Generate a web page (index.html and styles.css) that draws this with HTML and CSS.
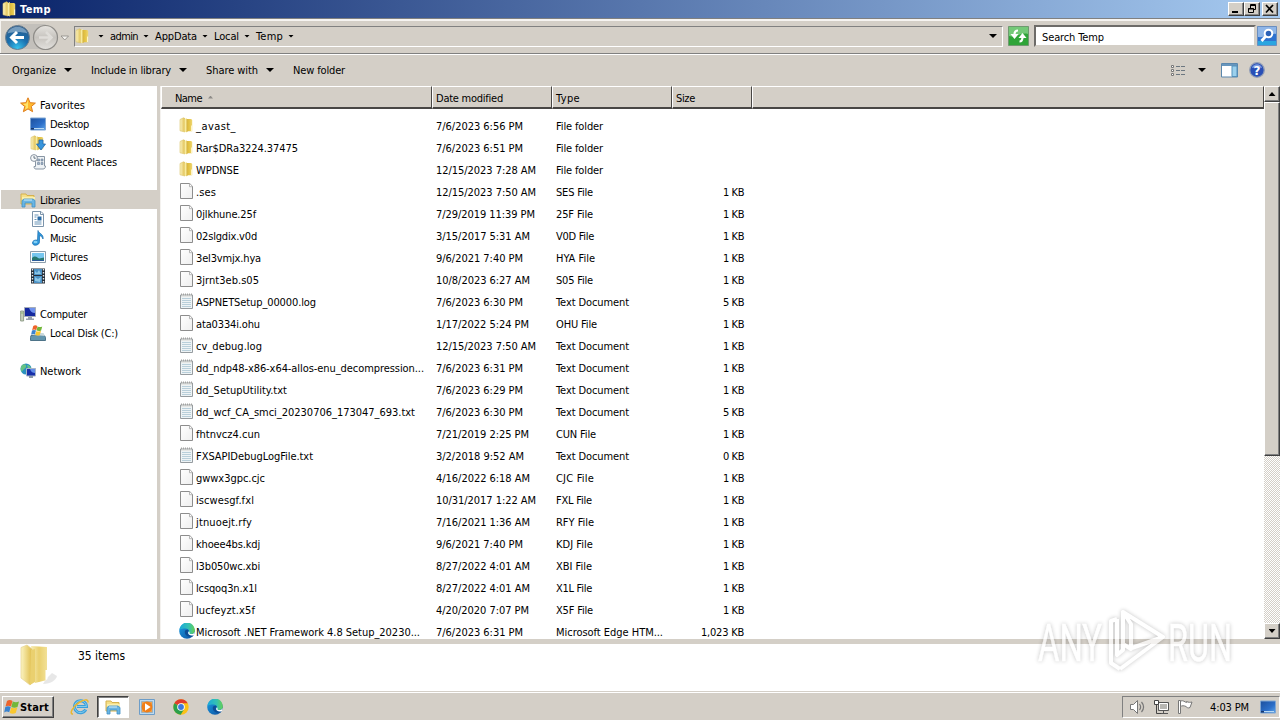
FILE: index.html
```html
<!DOCTYPE html>
<html lang="en">
<head>
<meta charset="utf-8">
<title>Temp</title>
<link rel="stylesheet" href="styles.css">
</head>
<body>
<svg class="defs" width="0" height="0">
  <defs>
    <linearGradient id="gold" x1="0" x2="1"><stop offset="0" stop-color="#f4e69a"/><stop offset=".5" stop-color="#e2c03f"/><stop offset="1" stop-color="#eed673"/></linearGradient>
    <linearGradient id="goldLight" x1="0" x2="1"><stop offset="0" stop-color="#fbf3c0"/><stop offset="1" stop-color="#dfbd4b"/></linearGradient>
    <linearGradient id="page" x1="0" y1="0" x2="1" y2="1"><stop offset="0" stop-color="#fff"/><stop offset="1" stop-color="#eeeeee"/></linearGradient>
    <linearGradient id="edgeBlue" x1="0" x2="1" y2="1"><stop offset="0" stop-color="#1b9de2"/><stop offset="1" stop-color="#0c4f9f"/></linearGradient>
    <linearGradient id="edgeGreen" x1="0" x2="1"><stop offset="0" stop-color="#1aa9dc"/><stop offset=".6" stop-color="#35c1b1"/><stop offset="1" stop-color="#66d153"/></linearGradient>
    <linearGradient id="screen" x1="0" x2="1" y2="1"><stop offset="0" stop-color="#1c4f9c"/><stop offset=".6" stop-color="#2c6fc9"/><stop offset="1" stop-color="#5fa6ea"/></linearGradient>
    <radialGradient id="orbBlue" cx=".5" cy=".95" r=".9"><stop offset="0" stop-color="#36c3ee"/><stop offset=".5" stop-color="#1a6fae"/><stop offset="1" stop-color="#2b5c8c"/></radialGradient>
    <linearGradient id="orbGray" x2="0" y2="1"><stop offset="0" stop-color="#e6e4e0"/><stop offset=".5" stop-color="#c6c3be"/><stop offset="1" stop-color="#e3e1dd"/></linearGradient>
  </defs>
  <symbol id="folder" viewBox="0 0 16 16">
    <path d="M1 2.500 4.500.8 6 1.600V15L1 13.800z" fill="url(#goldLight)" stroke="#dcc265" stroke-width=".6"/>
    <path d="M6 2h6.200l1 1v11.200H6z" fill="url(#gold)"/>
    <path d="M5.600 2.200 8 1v14.400L5.600 14.600z" fill="#f8ec9f"/><path d="M8 2v13" stroke="#c99f22" stroke-width=".8"/>
    <path d="M12.600 8.500v5.500" stroke="#fff8cf" stroke-width="1"/>
  </symbol>
  <symbol id="file" viewBox="0 0 16 16"><path d="M1.500.5h9.200l2.800 2.800v12.200h-12z" fill="url(#page)" stroke="#8d8d8d"/><path d="M10.500.8v2.900h2.800" fill="#fff" stroke="#a5a5a5" stroke-width=".8"/></symbol>
  <symbol id="text" viewBox="0 0 16 16"><path d="M1.500 2h12v13.500h-12z" fill="#eef3f5" stroke="#969ca0"/><path d="M3 5.500h9M3 7.500h9M3 9.500h9M3 11.500h9M3 13.500h9" stroke="#abc5d3" stroke-width=".8"/><path d="M2 1.500h11" stroke="#a4a4a2" stroke-width="2" stroke-dasharray="1 1"/><path d="M2 3.200h11" stroke="#e1e1dc"/></symbol>
  <symbol id="edge" viewBox="0 0 16 16"><circle cx="8" cy="8" r="7.800" fill="url(#edgeBlue)"/><path d="M.4 7A7.700 7.700 0 0 1 15.800 7.500c0 2.100-1.400 3.500-3.600 3.500-2 0-2.900-1-2.400-1.800C10.700 7.500 9 5.500 6.300 5.500 3.800 5.500 1.500 6 .4 7z" fill="url(#edgeGreen)"/><path d="M5.800 8.500c-.3 3 2.500 5.600 6 5.200 1.500-.2 2.300-.8 3-1.500-2.500 1-6 .4-6-3 0-1 .4-1.500 1-2-2-1-3.800-.2-4 1.300z" fill="#0d4d95"/><path d="M10 8.300c1 1.500.2 1.700.5 2.200 1.100 1.100 4.200.7 5-1.600l-.4 3c-2.600 1.200-5.800.3-6-2.200z" fill="#fff"/></symbol>
  <symbol id="star" viewBox="0 0 16 16"><path d="m8 .8 2.100 4.900 5.300.4-4.100 3.400 1.300 5.200L8 11.900l-4.600 2.800 1.300-5.200L.6 6.100l5.300-.4z" fill="#ffb92e" stroke="#df7e1d"/><path d="M8 3v8L5 12.500 6 9 3 7l3.500-.5z" fill="#ffe36c"/></symbol>
  <symbol id="desktop" viewBox="0 0 16 16"><path d="M.5 2h15v12H.5z" fill="url(#screen)" stroke="#7fa6d3"/><path d="M2 12.500h12" stroke="#b8daf4"/><path d="M1 12h3v1.500H1z" fill="#14366f"/></symbol>
  <symbol id="downloads" viewBox="0 0 16 16"><use href="#folder"/><path d="M9 5h4v4h2.500L11 15 6.500 9H9z" fill="#3895dc" stroke="#2168ab" stroke-width=".8"/></symbol>
  <symbol id="recent" viewBox="0 0 16 16"><path d="M5.500 2.500h9v9.500h1c0 2-1 3-2.500 3H6c-1.500 0-2-1-2-2.500h1.500z" fill="#eef2f5" stroke="#8895a3"/><path d="M7.500 5h2v2h-2zM11 5h2v2h-2zM7.500 8.500h2v2h-2zM11 8.500h2v2h-2z" fill="#9fb4c8" stroke="#6e8299" stroke-width=".6"/><circle cx="4" cy="4" r="3.400" fill="#f7f9fa" stroke="#8993a0"/><path d="M4 2v2.200h1.800" stroke="#456" fill="none" stroke-width=".8"/></symbol>
  <symbol id="libraries" viewBox="0 0 16 16"><path d="M1 2h5l1 1.500h7V12H1z" fill="#f5df87" stroke="#d5b14e"/><path d="M2 5h13v4H2z" fill="#fbefac"/><path d="M2 8.500 4 7h9l2 1.500V15h-3v-4H5v4H2z" fill="#69b5e3" stroke="#3f8fc4" stroke-width=".8"/><path d="M4 8h8" stroke="#d2effc"/></symbol>
  <symbol id="documents" viewBox="0 0 16 16"><path d="M2.500.5h8.500l2.500 2.500v12.500h-11z" fill="#fff" stroke="#7c94ab"/><path d="M4.500 4h4M4.500 6h2M4.500 8.500h2M4.500 11h7M4.500 13h7" stroke="#6994b8"/><path d="M7.500 5.500h4v4h-4z" fill="#296aa5"/><path d="M10.500 1v2.500h3" fill="none" stroke="#7c94ab"/></symbol>
  <symbol id="music" viewBox="0 0 16 16"><path d="M8 .5c.5 3 6 3.500 5 8.500-1-2.300-2-3-3.500-3.500v6.200c0 4-6.500 4.800-7 1.500-.3-2.500 2.500-3.700 5-3z" fill="#2f98dc" stroke="#176cae" stroke-width=".7"/><ellipse cx="5.500" cy="12" rx="2" ry="1.300" fill="#82d0f5"/></symbol>
  <symbol id="pictures" viewBox="0 0 16 16"><path d="M.5 2.500h15v11H.5z" fill="#f9fcfd" stroke="#8d9dab"/><path d="M2 4h12v8H2z" fill="#77c6ee"/><path d="M2 9c3-3 5-1 6 0s4 0 6-.5V12H2z" fill="#27786f"/><path d="M2 11h12v1H2z" fill="#2b5b99"/></symbol>
  <symbol id="videos" viewBox="0 0 16 16"><path d="M1 .5h14v15H1z" fill="#252e38"/><path d="M4 1h8v6H4zM4 8h8v7H4z" fill="#4b91c5"/><path d="M5 6V3l2 2 2-3 2 4zM5 13V9l3 2 3-2-1 5z" fill="#8dc7e6"/><path d="M2.500 1v14M13.500 1v14" stroke="#e6eaee" stroke-width="1.400" stroke-dasharray="1.500 1.500"/></symbol>
  <symbol id="computer" viewBox="0 0 16 16"><path d="M4.500 1.500h11v9h-11z" fill="#15299f" stroke="#a4acb9"/><path d="M9 2h6v5C12 7 10 5 9 2z" fill="#6e91ed"/><path d="M8 11h4v1.500H8zM6 12.500h8V14H6z" fill="#96a0ae"/><path d="M.6 5h3v10h-3z" fill="#c5cfba" stroke="#82907b" stroke-width=".8"/><path d="M1.500 7h1" stroke="#56a232"/></symbol>
  <symbol id="disk" viewBox="0 0 16 16"><path d="M1 10.500h13.500l1 2v3H.5v-3z" fill="#6295ad" stroke="#4d7388"/><path d="M1 10 2.500 8h11l1.500 3z" fill="#c9d9dd"/><use href="#flag" x="1" y="-.5" width="12" height="12"/></symbol>
  <symbol id="flag" viewBox="0 0 16 16"><path d="M3 2c2-1.500 4-1 5.500 0L7 7.500c-2-1-3.500-1-5.500 0z" fill="#ee642b"/><path d="M8.800 2.500c2 1 4.200 1 6.200 0L13.500 8c-2 1-4.500.8-6.200 0z" fill="#72b73a"/><path d="M1.300 8c2-1.200 3.700-1 5.400 0L5.200 13.200c-2-1-3.400-.8-5 .2z" fill="#3a83cf"/><path d="M7.200 8.500c2 1 4.300.8 6.200 0l-1.700 5.500c-2 1-4.300.8-6 0z" fill="#f9c72f"/></symbol>
  <symbol id="network" viewBox="0 0 16 16"><circle cx="6" cy="6" r="5.500" fill="#2a91bf"/><path d="M2 2c3-2 5 0 4 2S3 6 2 9C0 7 .5 4 2 2zM7 2c2 0 3 1 4 3L8 6z" fill="#65c384"/><path d="M6.500 5.500h9v7.500h-9z" fill="#172fa9" stroke="#a9b6c6"/><path d="M10 6h5v4c-2 0-4-1-5-4z" fill="#628ee9"/><path d="M9 13h4v2H9z" fill="#8c99a9"/></symbol>
  <symbol id="ie" viewBox="0 0 20 18"><path d="M15.800 11.500a6 6 0 1 1 .7-3H7" fill="none" stroke="#3a9fdb" stroke-width="3"/><path d="M15.800 11.500a6 6 0 1 1 .7-3H7" fill="none" stroke="#94d8f4" stroke-width=".8"/><path d="M3 16C-1 16.500 2 9 9 4.500 14 1.200 18.500.8 18 4.500" fill="none" stroke="#e8b730" stroke-width="1.500"/></symbol>
  <symbol id="player" viewBox="0 0 16 16"><path d="M.5.5h15v15H.5z" fill="#bcdaf0" stroke="#6d9dc8"/><path d="M2.500 2.500h11v11h-11z" fill="#f0a04c" stroke="#7aa7c9" stroke-width=".6"/><circle cx="8" cy="8" r="5.400" fill="#f07f18"/><path d="m6 4.200 5.600 3.800L6 11.800z" fill="#fff"/></symbol>
  <symbol id="chrome" viewBox="0 0 16 16"><circle cx="8" cy="8" r="7.700" fill="#fbc116"/><path d="M8 8 1.300 4.200A7.700 7.700 0 0 1 14.700 4.200H8z" fill="#df3b2e"/><path d="M1.300 4.200A7.700 7.700 0 0 0 7.700 15.700L11.200 10 8 8z" fill="#2ca04b"/><circle cx="8" cy="8" r="3.800" fill="#fff"/><circle cx="8" cy="8" r="2.900" fill="#3e78dc"/></symbol>
</svg>

<header class="titlebar">
  <svg class="i16"><use href="#folder"/></svg>
  <b class="t title" data-w="31">Temp</b>
  <span class="spacer"></span>
  <span class="winbtn"><svg width="14" height="12"><path d="M3 9h6" stroke="#000" stroke-width="2"/></svg></span>
  <span class="winbtn"><svg width="14" height="12"><path d="M5.500 5V1.500h5v5H9M5 2.500h6M3.500 5.500h5v4h-5zM3 6h6" fill="none" stroke="#000"/></svg></span>
  <span class="winbtn close"><svg width="14" height="12"><path d="m3 2 7 7.500M10 2 3 9.500" stroke="#000" stroke-width="1.700"/></svg></span>
</header>

<nav class="navbar">
  <svg class="orbs" width="72" height="30" viewBox="0 0 72 30">
    <path d="M18 2h28c-5 5-5 20 0 25H18z" fill="#c3c0bb"/>
    <circle cx="17.500" cy="15.500" r="12" fill="url(#orbBlue)" stroke="#6b7f90"/><path d="M7.500 11.500C10.500 2.500 24.500 2.500 27.500 11.500c-6-2-14-2-20 0z" fill="#a9c5dc" opacity=".6"/><path d="M17 10 11.500 15.500 17 21M12 15.500h12" stroke="#fff" stroke-width="3" fill="none"/>
    <circle cx="45.500" cy="15.500" r="12" fill="url(#orbGray)" stroke="#8e8c88" stroke-width="1.200"/><path d="M46 10 51.500 15.500 46 21M51 15.500H39" stroke="#dfddd9" stroke-width="2.600" fill="none"/>
    <path d="M61 14h7.500l-3.700 4z" fill="#f4f2ee" stroke="#8a8884" stroke-width=".8"/>
  </svg>
  <div class="address">
    <svg class="i16"><use href="#folder"/></svg>
    <i class="arrow a1"></i><span class="t crumb" data-w="28">admin</span>
    <i class="arrow"></i><span class="t crumb" data-w="42">AppData</span>
    <i class="arrow"></i><span class="t crumb" data-w="25">Local</span>
    <i class="arrow"></i><span class="t crumb" data-w="27">Temp</span>
    <i class="arrow"></i><span class="spacer"></span><i class="arrow big"></i>
  </div>
  <svg class="refresh" width="21" height="20"><path d="M.5.5h20v19H.5z" fill="#2fa438" stroke="#6f9970"/><path d="M1 1h19v7C13 6 8 12 1 10z" fill="#74c978"/><path d="M10 4.500C7.500 4.500 6.500 6 6.500 8.500" fill="none" stroke="#fff" stroke-width="2.200"/><path d="M2.500 8h8l-4 5z" fill="#fff"/><path d="M14.500 11c0 3-1 4.500-3 4.500" fill="none" stroke="#fff" stroke-width="2.200"/><path d="M10.500 12h8l-4-5z" fill="#fff"/></svg>
  <div class="search"><span class="t" data-w="62">Search Temp</span></div>
  <svg class="find" width="20" height="20"><path d="M.5.5h19v19H.5z" fill="#2e72cf" stroke="#6b8fc0"/><path d="M1 1h18v7C12 7 8 12 1 11z" fill="#8fb6e8"/><path d="M1 15h18v4H1z" fill="#2ba5e0"/><circle cx="11.500" cy="7.500" r="3.800" fill="#2c62b8" stroke="#fff" stroke-width="2"/><path d="m8.500 10.500-4 4.500" stroke="#fff" stroke-width="2.800"/></svg>
</nav>

<div class="toolbar">
  <span class="t" data-w="44">Organize</span><i class="arrow big"></i>
  <span class="t include" data-w="80">Include in library</span><i class="arrow big"></i>
  <span class="t share" data-w="52">Share with</span><i class="arrow big"></i>
  <span class="t newf" data-w="52">New folder</span>
  <span class="spacer"></span>
  <svg width="16" height="13"><path d="M1.500 1.500h2v2h-2zM1.500 5.500h2v2h-2zM1.500 9.500h2v2h-2z" fill="#fff" stroke="#777"/><path d="M6 2.500h4M11 2.500h4M6 6.500h4M11 6.500h4M6 10.500h4M11 10.500h4" stroke="#6c7780"/></svg>
  <i class="arrow big views"></i>
  <svg class="pane" width="17" height="15"><path d="M.5.5h16v13.500H.5z" fill="#fff" stroke="#5a87ad"/><path d="M1 2h15" stroke="#6796bd" stroke-width="2"/><path d="M11 3h5v10.500h-5z" fill="#9bd0ed" stroke="#5591bb"/></svg>
  <svg class="help" width="16" height="16"><circle cx="8" cy="8" r="7.300" fill="#294fb6" stroke="#929eb6" stroke-width="1.300"/><path d="M3 6c1-5 9-5 10 0-3-1-7-1-10 0z" fill="#7c9be0"/><text x="8" y="12.500" class="q">?</text></svg>
</div>

<main class="body">
  <aside class="tree" id="tree"></aside>
  <section class="list">
    <div class="head">
      <div class="h name"><span class="t" data-w="27">Name</span><i class="sort"></i></div>
      <div class="h date"><span class="t" data-w="67">Date modified</span></div>
      <div class="h type"><span class="t" data-w="24">Type</span></div>
      <div class="h size"><span class="t" data-w="19">Size</span></div>
      <div class="h rest"></div>
    </div>
    <div class="rows" id="rows"></div>
  </section>
  <div class="scroll">
    <span class="sb"><i class="up"></i></span><span class="thumb"></span><span class="track"></span><span class="sb"><i class="down"></i></span>
  </div>
</main>

<footer class="details">
  <svg width="42" height="44" viewBox="0 0 42 44"><path d="M26 35 32 29l5 3c-1 4-6 8-14 8z" fill="#bbb" opacity=".35"/><path d="m11 2 16 1v33l-12 3z" fill="url(#gold)" opacity=".75"/><path d="M1 3.500 7 1l5 4v34l-2 2-9-7z" fill="url(#goldLight)" stroke="#e5d393" stroke-width=".7"/><path d="m11 6 4-1v33l-5 3z" fill="#ead06f"/><path d="M25.500 26h2v9l-2 2z" fill="#fff"/></svg>
  <span class="t count" data-w="47">35 items</span>
</footer>

<footer class="taskbar">
  <div class="start"><svg width="16" height="16"><use href="#flag"/></svg><b class="t" data-w="29">Start</b></div>
  <svg class="ie" width="20" height="18"><use href="#ie"/></svg>
  <div class="active"><svg class="i16"><use href="#libraries"/></svg></div>
  <svg class="i16 wmp"><use href="#player"/></svg>
  <svg class="i16 chr"><use href="#chrome"/></svg>
  <svg class="i16 edg"><use href="#edge"/></svg>
  <span class="spacer"></span>
  <div class="tray">
    <svg width="17" height="16"><path d="M1.500 5.500h3l4-4v13l-4-4h-3z" fill="#fff" stroke="#777"/><path d="M10.500 5c1.500 2 1.500 4 0 6M12.500 3c2.500 3 2.500 7 0 10" fill="none" stroke="#777" stroke-width="1.200"/></svg>
    <svg class="net" width="17" height="16"><path d="M5.500 3.500h10v8h-10z" fill="#b7b6b2" stroke="#555"/><path d="M6.500 4.500h8v6h-8z" fill="none" stroke="#fff"/><path d="M7 14.500h8M10.500 12v2" stroke="#555"/><path d="M1.500 1.500h4v4h-4z" fill="#fff" stroke="#444"/><path d="M3.500 6v8.500H8" fill="none" stroke="#444"/></svg>
    <svg class="flg" width="17" height="16"><path d="M1.500 1.500h2v13h-2z" fill="#fff" stroke="#777"/><path d="M3.500 2c3-1 4 1 6 1.500v-1c2 1 4 1 5.500.5l-2 5.500c-2 1-3 0-4-1-2-1-4-1-5.500 0z" fill="#fff" stroke="#777"/></svg>
    <span class="t clock" data-w="39">4:03 PM</span>
    <svg class="i16 desk"><use href="#desktop"/></svg>
  </div>
</footer>

<svg class="watermark" width="240" height="100" viewBox="0 0 240 100">
  <g class="mark">
    <text x="8" y="61" textLength="64" lengthAdjust="spacingAndGlyphs">ANY</text>
    <text x="138" y="61" textLength="64" lengthAdjust="spacingAndGlyphs">RUN</text>
    <path d="M93 12v32l8 5V24l-8-12 40 25-43 32M87 19l-6 2v42l9 6M93 44v6l-6 5V19M133 37l-34 12"/>
  </g>
</svg>
<script src="app.js"></script>
</body>
</html>
```
FILE: app.js
```js
const icon = id => `<svg class="i16"><use href="#${id}"/></svg>`;
const label = (text, w) => `<span class="t" data-w="${w}">${text}</span>`;

const groups = [
  ['star', 'Favorites', 45, [['desktop', 'Desktop', 39], ['downloads', 'Downloads', 52], ['recent', 'Recent Places', 67]]],
  ['libraries', 'Libraries', 40, [['documents', 'Documents', 53], ['music', 'Music', 26], ['pictures', 'Pictures', 38], ['videos', 'Videos', 31]]],
  ['computer', 'Computer', 47, [['disk', 'Local Disk (C:)', 68]]],
  ['network', 'Network', 41, []]
];
document.getElementById('tree').innerHTML = groups.map(([ic, name, w, kids]) =>
  `<div class="group"><div class="node${name === 'Libraries' ? ' selected' : ''}">${icon(ic)}${label(name, w)}</div>` +
  kids.map(k => `<div class="node child">${icon(k[0])}${label(k[1], k[2])}</div>`).join('') + '</div>').join('');

// icon, name, width, date, width, type, width, size
const files = [
  ['folder', '_avast_', 40, '7/6/2023 6:56 PM', 87, 'File folder', 47, ''],
  ['folder', 'Rar$DRa3224.37475', 102, '7/6/2023 6:51 PM', 87, 'File folder', 47, ''],
  ['folder', 'WPDNSE', 43, '12/15/2023 7:28 AM', 100, 'File folder', 47, ''],
  ['file', '.ses', 20, '12/15/2023 7:50 AM', 100, 'SES File', 37, '1 KB'],
  ['file', '0jlkhune.25f', 60, '7/29/2019 11:39 PM', 99, '25F File', 37, '1 KB'],
  ['file', '02slgdix.v0d', 61, '3/15/2017 5:31 AM', 94, 'V0D File', 38, '1 KB'],
  ['file', '3el3vmjx.hya', 65, '9/6/2021 7:40 PM', 87, 'HYA File', 39, '1 KB'],
  ['file', '3jrnt3eb.s05', 63, '10/8/2023 6:27 AM', 94, 'S05 File', 37, '1 KB'],
  ['text', 'ASPNETSetup_00000.log', 120, '7/6/2023 6:30 PM', 87, 'Text Document', 73, '5 KB'],
  ['file', 'ata0334i.ohu', 64, '1/17/2022 5:24 PM', 93, 'OHU File', 41, '1 KB'],
  ['text', 'cv_debug.log', 66, '12/15/2023 7:50 AM', 100, 'Text Document', 73, '1 KB'],
  ['text', 'dd_ndp48-x86-x64-allos-enu_decompression...', 228, '7/6/2023 6:31 PM', 87, 'Text Document', 73, '1 KB'],
  ['text', 'dd_SetupUtility.txt', 91, '7/6/2023 6:29 PM', 87, 'Text Document', 73, '1 KB'],
  ['text', 'dd_wcf_CA_smci_20230706_173047_693.txt', 219, '7/6/2023 6:30 PM', 87, 'Text Document', 73, '5 KB'],
  ['file', 'fhtnvcz4.cun', 64, '7/21/2019 2:25 PM', 93, 'CUN File', 40, '1 KB'],
  ['text', 'FXSAPIDebugLogFile.txt', 117, '3/2/2018 9:52 AM', 88, 'Text Document', 73, '0 KB'],
  ['file', 'gwwx3gpc.cjc', 69, '4/16/2022 6:18 AM', 94, 'CJC File', 38, '1 KB'],
  ['file', 'iscwesgf.fxl', 58, '10/31/2017 1:22 AM', 100, 'FXL File', 36, '1 KB'],
  ['file', 'jtnuoejt.rfy', 56, '7/16/2021 1:36 AM', 94, 'RFY File', 38, '1 KB'],
  ['file', 'khoee4bs.kdj', 64, '9/6/2021 7:40 PM', 87, 'KDJ File', 37, '1 KB'],
  ['file', 'l3b050wc.xbi', 64, '8/27/2022 4:01 AM', 94, 'XBI File', 36, '1 KB'],
  ['file', 'lcsqoq3n.x1l', 61, '8/27/2022 4:01 AM', 94, 'X1L File', 36, '1 KB'],
  ['file', 'lucfeyzt.x5f', 59, '4/20/2020 7:07 PM', 93, 'X5F File', 37, '1 KB'],
  ['edge', 'Microsoft .NET Framework 4.8 Setup_20230...', 224, '7/6/2023 6:31 PM', 87, 'Microsoft Edge HTM...', 107, '1,023 KB']
];
document.getElementById('rows').innerHTML = files.map(f =>
  `<div class="row"><div class="name">${icon(f[0])}${label(f[1], f[2])}</div><div class="date">${label(f[3], f[4])}</div>` +
  `<div class="type">${label(f[5], f[6])}</div><div class="size">${f[7] ? label(f[7], f[7].length > 4 ? 43 : 21) : ''}</div></div>`).join('');

document.querySelectorAll('.t').forEach(el => {
  const diff = el.dataset.w - el.getBoundingClientRect().width;
  el.style.letterSpacing = (diff / el.textContent.length).toFixed(3) + 'px';
});
```
FILE: styles.css
```css
* { box-sizing: border-box; }
body { margin: 0; width: 1280px; height: 720px; overflow: hidden; display: flex; flex-direction: column; background: #d4cfc7; color: #000; font: 11px/14px "DejaVu Sans Condensed", "DejaVu Sans", sans-serif; font-stretch: condensed; }
svg { flex: none; display: block; }
.defs { position: absolute; }
.i16 { width: 16px; height: 16px; }
.t { white-space: pre; flex: none; padding-top: 2px; }
.spacer { flex: 1; }

.titlebar { height: 18px; flex: none; display: flex; align-items: center; padding: 0 2px; background: linear-gradient(90deg, #0a246a, #a6caf0); color: #fff; }
.title { margin-left: 2px; }
.winbtn { width: 16px; height: 14px; background: #d4cfc7; border: 1px solid; border-color: #fff #404040 #404040 #fff; box-shadow: inset -1px -1px #888; }
.close { margin-left: 2px; }

.navbar { height: 36px; flex: none; display: flex; align-items: center; border-top: 1px solid #808080; border-bottom: 1px solid #808080; box-shadow: inset 1px 2px #f6f4f1, 0 1px #fff; }
.orbs { margin-top: 2px; }
.address { margin-left: 2px; width: 929px; height: 21px; display: flex; align-items: center; border: 1px solid; border-color: #808080 #fff #fff #808080; }
.arrow { width: 6px; height: 3px; background: #000; clip-path: polygon(0 0, 100% 0, 50% 100%); flex: none; }
.a1 { margin-left: 7px; }
.crumb { margin: 0 5px 0 6px; }
.arrow.big { width: 8px; height: 4px; }
.address .big { margin-right: 5px; }
.refresh { margin-left: 5px; }
.search { margin-left: 5px; width: 222px; height: 22px; background: #fff; border: 2px solid; border-color: #6d6b68 #d4cfc7 #d4cfc7 #6d6b68; padding: 2px 6px 0; display: flex; align-items: center; }
.find { margin-left: 1px; }

.toolbar { height: 32px; flex: none; display: flex; align-items: center; padding: 0 15px 0 12px; }
.toolbar .arrow { margin-left: 8px; }
.include { margin-left: 19px; }
.share { margin-left: 19px; }
.newf { margin-left: 19px; }
.toolbar .views { margin-left: 12px; }
.pane { margin-left: 15px; }
.help { margin-left: 11px; }
.q { font: bold 12px "DejaVu Sans", sans-serif; fill: #fff; text-anchor: middle; }

.body { height: 553px; flex: none; display: flex; }
.tree { width: 157px; background: #fff; padding: 9px 0 0 1px; }
.group { margin-bottom: 19px; }
.node { height: 19px; display: flex; align-items: center; padding-left: 19px; gap: 4px; }
.node.child { padding-left: 29px; }
.selected { background: #d4cfc7; }
.list { flex: 1; margin-left: 4px; background: #fff; overflow: hidden; box-shadow: -1px 0 #f4f2ef; }
.head { height: 23px; display: flex; background: #d4cfc7; }
.h { display: flex; align-items: center; border-top: 1px solid #fff; border-left: 1px solid #fff; border-bottom: 2px solid #484644; border-right: 1px solid #484644; padding-top: 2px; }
.h.name { width: 271px; padding-left: 13px; }
.h.date, .h.type { width: 120px; padding-left: 3px; }
.h.size { width: 80px; padding-left: 3px; }
.h.rest { flex: 1; }
.sort { width: 5px; height: 3px; background: #8d8b88; clip-path: polygon(50% 0, 100% 100%, 0 100%); margin: -2px 0 0 6px; }
.rows { padding-top: 6px; height: 530px; overflow: hidden; }
.row { height: 22px; display: flex; align-items: center; }
.row > div { display: flex; align-items: center; }
.row .name { width: 275px; padding-left: 18px; gap: 1px; }
.row .i16 { position: relative; top: -1px; }
.row .date { width: 120px; }
.row .type { width: 120px; }
.row .size { width: 68px; justify-content: flex-end; }
.scroll { width: 16px; display: flex; flex-direction: column; background: #e9e7e3; }
.sb, .thumb { background: #d4cfc7; border: 1px solid; border-color: #fff #404040 #404040 #fff; box-shadow: inset -1px -1px #808080; }
.sb { height: 16px; flex: none; display: flex; align-items: center; justify-content: center; }
.up, .down { width: 7px; height: 4px; background: #000; clip-path: polygon(50% 0, 100% 100%, 0 100%); }
.down { clip-path: polygon(0 0, 100% 0, 50% 100%); }
.thumb { height: 354px; flex: none; }
.track { flex: 1; background: repeating-conic-gradient(#d4cfc7 0 25%, #fff 0 50%) 0 0 / 2px 2px; }

.details { margin-top: 5px; height: 47px; flex: none; background: #fff; display: flex; padding-left: 20px; font-size: 12px; }
.count { margin: 3px 0 0 16px; }
.taskbar { margin-top: 1px; height: 28px; flex: none; border-top: 1px solid #fff; display: flex; align-items: center; padding: 1px 0 0 2px; }
.start { width: 52px; height: 22px; display: flex; align-items: center; border: 1px solid; border-color: #fff #404040 #404040 #fff; box-shadow: inset -1px -1px #808080; padding-left: 1px; }
.ie { margin-left: 16px; }
.active { margin-left: 7px; width: 32px; height: 22px; display: flex; align-items: center; justify-content: center; background: #fff; border: 1px solid; border-color: #404040 #fff #fff #404040; box-shadow: inset 1px 1px #808080; }
.wmp { margin-left: 10px; }
.chr { margin-left: 18px; }
.edg { margin-left: 18px; }
.tray { width: 158px; height: 22px; display: flex; align-items: center; padding-left: 6px; border: 1px solid; border-color: #808080 #fff #fff #808080; }
.net { margin-left: 7px; }
.flg { margin-left: 7px; }
.clock { margin-left: 16px; }
.desk { margin-left: 11px; }

.watermark { position: absolute; left: 1030px; top: 600px; overflow: visible; }
.mark { filter: drop-shadow(0 0 2px rgba(0,0,0,.32)); opacity: .72; }
.mark text { font: 52px/60px "Roboto", sans-serif; fill: #fff; stroke: #fff; stroke-width: .6; }
.mark path { fill: none; stroke: #fff; stroke-width: 4; stroke-linejoin: round; }
```
